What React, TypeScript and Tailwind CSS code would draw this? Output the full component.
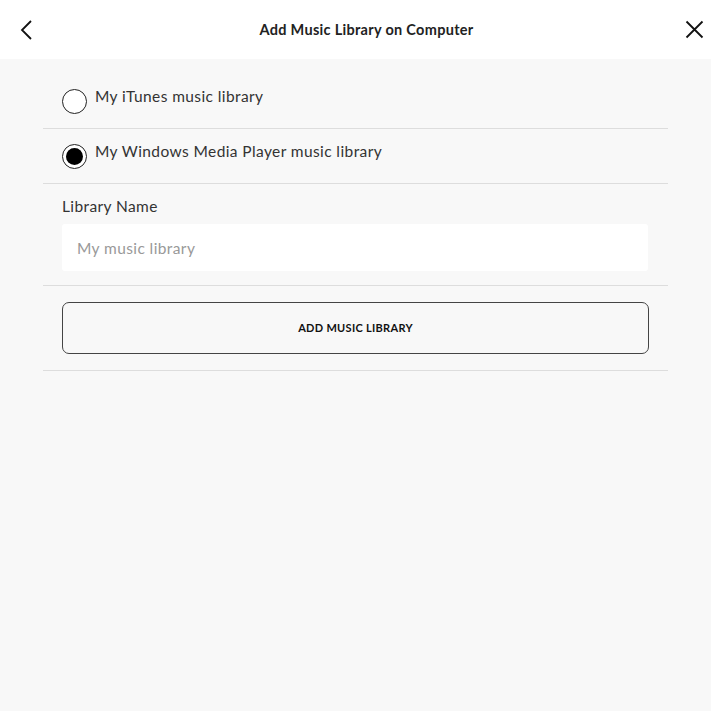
import { useState } from 'react';

const options = [
  { id: 'itunes', label: 'My iTunes music library' },
  { id: 'wmp', label: 'My Windows Media Player music library' },
];

export default function App() {
  const [selected, setSelected] = useState('wmp');

  return (
    <div
      className="flex h-[711px] w-[711px] flex-col bg-[#f8f8f8] text-[#222]"
      style={{ fontFamily: 'Lato, "Open Sans", sans-serif' }}
    >
      <header className="flex h-[59px] items-center justify-between bg-white pl-[19px] pr-[7px]">
        <button className="flex items-center">
          <svg width="14" height="20" viewBox="0 0 14 20" fill="none" stroke="#111" strokeWidth="1.8">
            <path d="M12 1 L3 10 L12 19" />
          </svg>
        </button>
        <h1 className="ml-[15px] text-[14.5px] font-bold tracking-[0.3px] text-[#222]">
          Add Music Library on Computer
        </h1>
        <button className="flex items-center">
          <svg width="19" height="19" viewBox="0 0 19 19" fill="none" stroke="#111" strokeWidth="1.8">
            <path d="M1.5 1.5 L17.5 17.5 M17.5 1.5 L1.5 17.5" />
          </svg>
        </button>
      </header>

      <main className="mx-[43px] mt-[15px] w-[625px]">
        {options.map((opt) => (
          <label
            key={opt.id}
            className="flex h-[55px] cursor-pointer items-start border-b border-[#dddddd] pl-[19px] pt-[15px]"
            onClick={() => setSelected(opt.id)}
          >
            <span className="flex h-[25px] w-[25px] shrink-0 items-center justify-center rounded-full border-[1.5px] border-[#222] bg-white">
              {selected === opt.id && <span className="h-[17px] w-[17px] rounded-full bg-black" />}
            </span>
            <span className="ml-[8px] mt-[-4px] text-[15.5px] tracking-[0.4px] text-[#333]">{opt.label}</span>
          </label>
        ))}

        <div className="border-b border-[#dddddd] px-[19px] pb-[14px] pt-[11px]">
          <div className="text-[15.5px] tracking-[0.4px] text-[#333]">Library Name</div>
          <input
            className="mt-[6px] h-[47px] w-[586px] rounded-[3px] bg-white px-[15px] text-[15.5px] tracking-[0.4px] text-[#333] outline-none placeholder:text-[#999]"
            placeholder="My music library"
          />
        </div>

        <div className="border-b border-[#dddddd] px-[19px] pb-[16px] pt-[16px]">
          <button className="flex h-[52px] w-[587px] items-center justify-center rounded-[7px] border-[1.5px] border-[#444] text-[11px] font-bold tracking-[0.3px] text-[#111]">
            ADD MUSIC LIBRARY
          </button>
        </div>
      </main>
    </div>
  );
}
